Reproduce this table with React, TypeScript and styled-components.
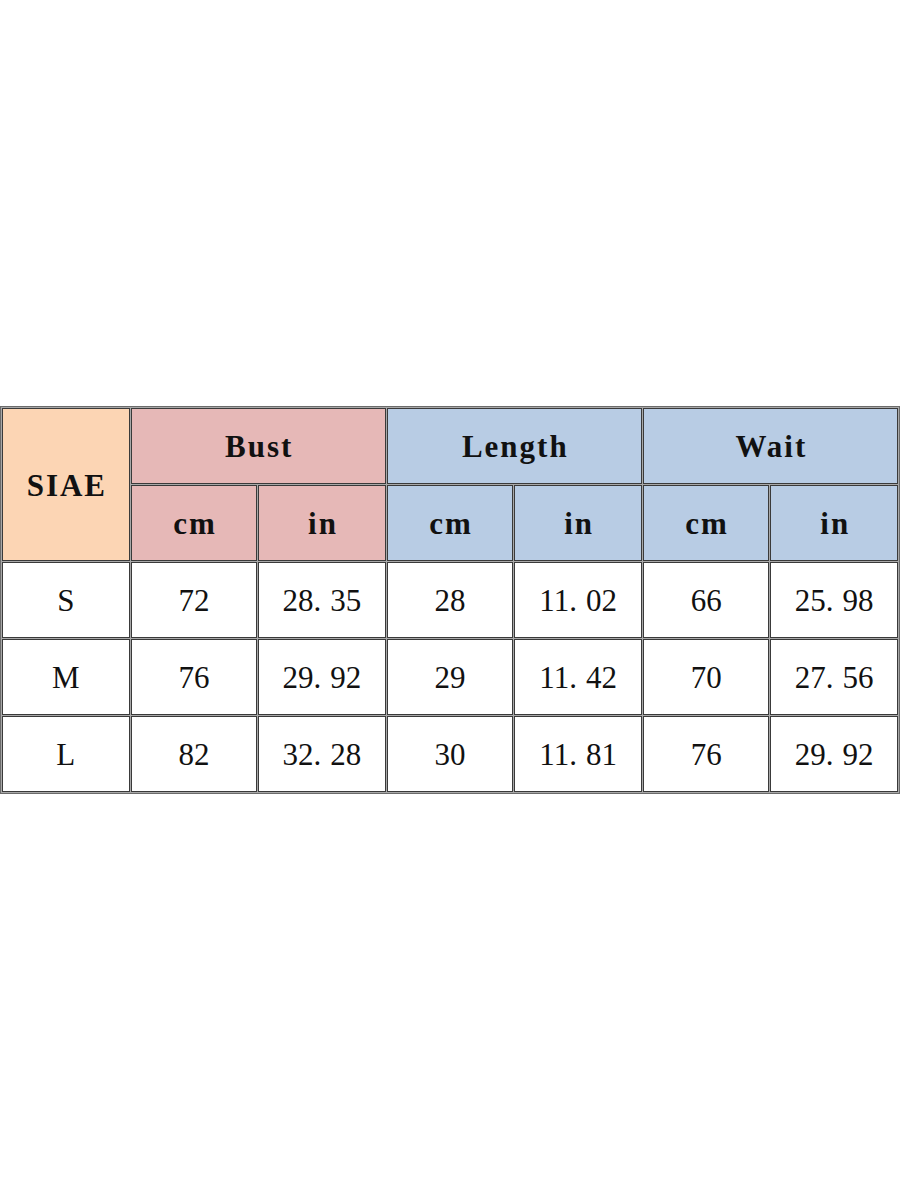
import React from 'react';
import styled, { createGlobalStyle } from 'styled-components';

const GlobalStyle = createGlobalStyle`
  html, body {
    margin: 0;
    padding: 0;
    background: #ffffff;
  }
`;

const tones: Record<string, string> = {
  size: '#fcd5b4',
  bust: '#e6b8b7',
  length: '#b8cce4',
  waist: '#b8cce4',
  plain: '#ffffff',
};

const Page = styled.div`
  min-height: 1200px;
  display: flex;
  align-items: center;
  justify-content: flex-start;
`;

const Table = styled.table`
  border-collapse: separate;
  border-spacing: 1px;
  border: 1px solid #6b6b6b;
  background: #a8a8a8;
  table-layout: fixed;
  margin-top: -1px;
`;

const HeadCell = styled.th<{ $tone: string }>`
  width: 125px;
  height: 71px;
  padding: 3px 0 0 2px;
  border: 1px solid #3a3a3a;
  background: ${(p) => tones[p.$tone]};
  color: #111;
  font-family: 'Liberation Serif', 'Times New Roman', serif;
  font-weight: bold;
  font-size: 31px;
  letter-spacing: 2px;
  text-align: center;
  vertical-align: middle;
`;

const Cell = styled.td`
  width: 125px;
  height: 72px;
  padding: 2px 0 0;
  border: 1px solid #3a3a3a;
  background: #ffffff;
  color: #111;
  font-family: 'Liberation Serif', 'Times New Roman', serif;
  font-size: 31px;
  text-align: center;
  vertical-align: middle;
`;

const Dot = styled.span`
  padding-right: 9px;
`;

const rows = [
  { size: 'S', values: ['72', '28.35', '28', '11.02', '66', '25.98'] },
  { size: 'M', values: ['76', '29.92', '29', '11.42', '70', '27.56'] },
  { size: 'L', values: ['82', '32.28', '30', '11.81', '76', '29.92'] },
];

const groups = [
  { key: 'bust', title: 'Bust' },
  { key: 'length', title: 'Length' },
  { key: 'waist', title: 'Wait' },
];

function Num({ value }: { value: string }) {
  const [whole, frac] = value.split('.');
  if (frac === undefined) return <>{value}</>;
  return (
    <>
      {whole}
      <Dot>.</Dot>
      {frac}
    </>
  );
}

export default function App() {
  return (
    <Page>
      <GlobalStyle />
      <Table>
        <thead>
          <tr>
            <HeadCell $tone="size" rowSpan={2}>SIAE</HeadCell>
            {groups.map((g) => (
              <HeadCell key={g.key} $tone={g.key} colSpan={2}>
                {g.title}
              </HeadCell>
            ))}
          </tr>
          <tr>
            {groups.map((g) => (
              <React.Fragment key={g.key}>
                <HeadCell $tone={g.key}>cm</HeadCell>
                <HeadCell $tone={g.key}>in</HeadCell>
              </React.Fragment>
            ))}
          </tr>
        </thead>
        <tbody>
          {rows.map((r) => (
            <tr key={r.size}>
              <Cell>{r.size}</Cell>
              {r.values.map((v, i) => (
                <Cell key={i}>
                  <Num value={v} />
                </Cell>
              ))}
            </tr>
          ))}
        </tbody>
      </Table>
    </Page>
  );
}
